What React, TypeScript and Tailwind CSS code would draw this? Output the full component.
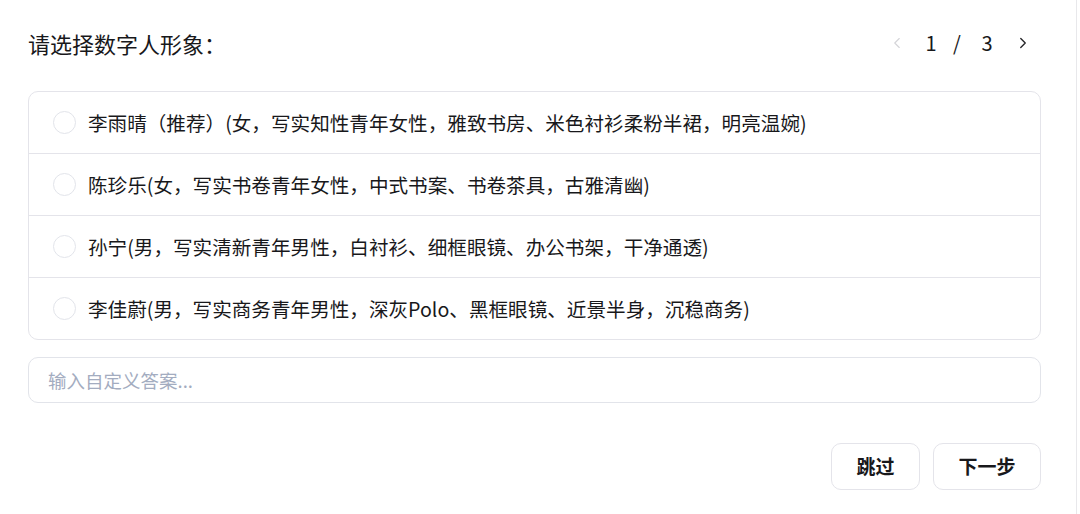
import { useState } from 'react';
import { ChevronLeft, ChevronRight } from 'lucide-react';

const avatars = [
  '李雨晴（推荐）(女，写实知性青年女性，雅致书房、米色衬衫柔粉半裙，明亮温婉)',
  '陈珍乐(女，写实书卷青年女性，中式书案、书卷茶具，古雅清幽)',
  '孙宁(男，写实清新青年男性，白衬衫、细框眼镜、办公书架，干净通透)',
  '李佳蔚(男，写实商务青年男性，深灰Polo、黑框眼镜、近景半身，沉稳商务)',
];

export default function App() {
  const [selected, setSelected] = useState<number | null>(null);
  const [custom, setCustom] = useState('');

  return (
    <div
      className="w-[1077px] h-[514px] bg-white border-r border-[#e8e8eb] pl-[28px] pr-[35px] flex flex-col text-[#18181b]"
      style={{ fontFamily: '"Noto Sans CJK SC", "Noto Sans", sans-serif' }}
    >
      {/* Header */}
      <div className="h-[88px] flex items-center justify-between pb-[2px]">
        <h2 className="text-[22px] leading-none font-normal">请选择数字人形象：</h2>
        <div className="flex items-center text-[20px] leading-none mr-[6px]">
          <button className="w-[24px] flex justify-center text-[#d4d4d8]" disabled>
            <ChevronLeft className="w-[18px] h-[18px]" strokeWidth={1.5} />
          </button>
          <span className="ml-[12px] w-[20px] text-center">1</span>
          <span className="ml-[6px] w-[20px] text-center">/</span>
          <span className="ml-[10px] w-[20px] text-center">3</span>
          <button className="ml-[14px] w-[24px] flex justify-center text-[#27272a]">
            <ChevronRight className="w-[18px] h-[18px]" strokeWidth={1.8} />
          </button>
        </div>
      </div>

      {/* Options */}
      <div className="mt-[3px] rounded-[10px] border border-[#e4e4ea] overflow-hidden">
        {avatars.map((name, i) => (
          <label
            key={name}
            className={`flex items-center pl-[24px] gap-[12px] cursor-pointer ${
              i > 0 ? 'h-[62px] border-t border-[#e4e4ea]' : 'h-[61px]'
            }`}
            onClick={() => setSelected(i)}
          >
            <span
              className={`w-[23px] h-[23px] rounded-full border shrink-0 ${
                selected === i ? 'border-[6px] border-[#3b82f6]' : 'border-[#e2e4ea]'
              }`}
            />
            <span className="text-[19.6px] leading-none whitespace-nowrap">{name}</span>
          </label>
        ))}
      </div>

      {/* Custom answer */}
      <input
        value={custom}
        onChange={(e) => setCustom(e.target.value)}
        placeholder="输入自定义答案..."
        className="mt-[17px] h-[46px] rounded-[10px] border border-[#e2e4ea] px-[19px] text-[18.5px] outline-none placeholder:text-[#a3acc0]"
      />

      {/* Actions */}
      <div className="mt-[40px] flex justify-end gap-[13px]">
        <button className="w-[89px] h-[47px] rounded-[10px] border border-[#e4e4ea] text-[19px] font-bold">
          跳过
        </button>
        <button className="w-[108px] h-[47px] rounded-[10px] border border-[#e4e4ea] text-[19px] font-bold">
          下一步
        </button>
      </div>
    </div>
  );
}
